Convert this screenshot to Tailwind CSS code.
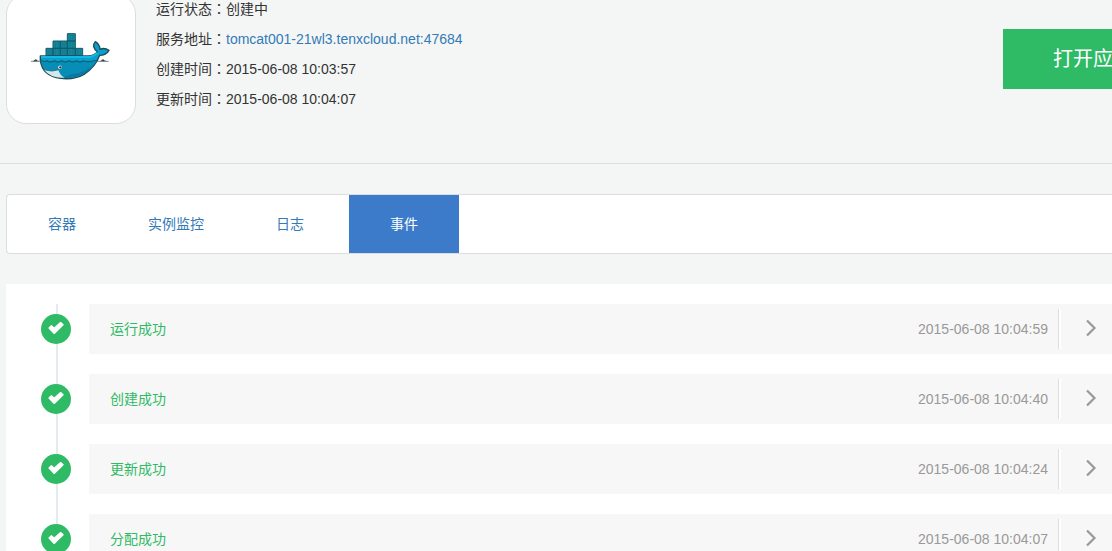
<!DOCTYPE html>
<html lang="zh-CN">
<head>
<meta charset="utf-8">
<title>tomcat001</title>
<script src="https://cdn.jsdelivr.net/npm/@tailwindcss/browser@4"></script>
</head>
<body class="h-screen overflow-hidden bg-[#f4f6f5] font-['Liberation_Sans','Noto_Sans_CJK_SC',sans-serif] text-sm text-[#333]">
<svg class="hidden" aria-hidden="true">
  <symbol id="check" viewBox="0 0 16 12"><path d="M1 6 3.400 3.700 6.200 6.300 12.600.4 15.100 2.700 6.200 11.500Z" fill="#fff" stroke="#fff" stroke-width="1.200" stroke-linejoin="round"/></symbol>
  <symbol id="chevron" viewBox="0 0 12 18"><path d="M2 1.500 9.500 9 2 16.500" fill="none" stroke="#999" stroke-width="2.200"/></symbol>
</svg>

<header class="-mt-1.5 flex items-start border-b border-[#ddd] pb-[39px] pl-1.5">
  <div class="flex size-[130px] shrink-0 items-center justify-center rounded-[20px] border border-[#ddd] bg-white">
    <svg class="h-[60px] w-[90px]" viewBox="3 12 270 180" role="img" aria-label="Docker">
      <g fill="#12889c" stroke="#17596a" stroke-width="3">
        <path d="M127 26h24v22h-24zM84 48h22v22H84zM106 48h21v22h-21zM127 48h24v22h-24zM63 70h21v22H63zM84 70h22v22H84zM106 70h21v22h-21zM127 70h24v22h-24zM151 70h22v22h-22z"/>
        <path d="M135 28v18M143 28v18M91 50v18M99 50v18M113 50v18M120 50v18M135 50v18M143 50v18M70 72v18M77 72v18M91 72v18M99 72v18M113 72v18M120 72v18M135 72v18M143 72v18M158 72v18M166 72v18" fill="none" stroke="#0c7187" stroke-width="1.500"/>
      </g>
      <path d="M46 93H190Q210 92 217 80Q198 64 211 50Q224 58 225 73Q238 67 252 76Q243 91 224 91Q211 127 177 148Q147 165 107 160Q52 153 46 106Z" fill="#079fcb" stroke="#214b59" stroke-width="4" stroke-linejoin="round"/>
      <path d="M48 108Q57 113 66 107Q77 114 88 107Q99 114 110 107Q121 114 132 107Q143 114 154 107Q165 114 176 107Q187 114 216 106Q203 132 174 147Q147 162 112 158Q60 151 48 108Z" fill="#078db6"/>
      <path d="M115 158Q139 145 163 144Q190 135 207 118Q195 137 174 147Q147 162 115 158Z" fill="#0879a0"/>
      <path d="M57 134Q80 142 100 135Q105 151 118 158Q77 160 57 134Z" fill="#d4e7e9"/>
      <path d="M57 134Q81 143 101 134" fill="none" stroke="#286577" stroke-width="2"/>
      <path d="M48 96H194Q211 92 218 83" fill="none" stroke="#12b7e4" stroke-width="6"/>
      <path d="M46 105Q57 113 66 107Q77 114 88 107Q99 114 110 107Q121 114 132 107Q143 114 154 107Q165 114 176 107Q187 114 217 105" fill="none" stroke="#145f7a" stroke-width="3.500"/>
      <path d="M18 109H46M215 109H251" stroke="#45565b" stroke-width="2"/>
      <path d="M23 109Q30 105 33 102Q35 107 43 109ZM225 109Q232 105 234 102Q237 107 247 109Z" fill="#36464b"/>
      <circle cx="105" cy="127" r="5.500" fill="#edf3f3"/><circle cx="106" cy="127" r="3.500" fill="#293e49"/>
    </svg>
  </div>
  <dl class="ml-5 leading-[30px]">
    <div class="flex"><dt>运行状态<span class="font-['Noto_Sans_CJK_TC',sans-serif] leading-none" lang="zh-TW">：</span></dt><dd>创建中</dd></div>
    <div class="flex"><dt>服务地址<span class="font-['Noto_Sans_CJK_TC',sans-serif] leading-none" lang="zh-TW">：</span></dt><dd><a href="#" class="text-[#337ab7]">tomcat001-21wl3.tenxcloud.net:47684</a></dd></div>
    <div class="flex"><dt>创建时间<span class="font-['Noto_Sans_CJK_TC',sans-serif] leading-none" lang="zh-TW">：</span></dt><dd>2015-06-08 10:03:57</dd></div>
    <div class="flex"><dt>更新时间<span class="font-['Noto_Sans_CJK_TC',sans-serif] leading-none" lang="zh-TW">：</span></dt><dd>2015-06-08 10:04:07</dd></div>
  </dl>
  <button type="button" class="mt-[35px] -mr-[71px] ml-auto h-[60px] shrink-0 bg-[#2fba66] px-[50px] text-xl whitespace-nowrap text-white">打开应用</button>
</header>

<nav class="mt-[30px] ml-1.5 flex gap-1 rounded-l border border-r-0 border-[#ddd] bg-white text-center leading-[58px] text-[#337ab7]">
  <a href="#" class="w-[110px]">容器</a>
  <a href="#" class="w-[110px]">实例监控</a>
  <a href="#" class="w-[110px]">日志</a>
  <a href="#" aria-current="page" class="w-[110px] bg-[#3b7bca] text-white">事件</a>
</nav>

<main class="mt-[30px] ml-1.5 bg-white pt-5 pl-[35px]">
  <ol>
    <li class="flex">
      <div class="relative flex w-[30px] justify-center pt-2.5 pb-[30px]">
        <span class="absolute inset-y-0 left-[15px] w-0.5 bg-[#e5eaef]"></span>
        <span class="relative flex size-[30px] items-center justify-center rounded-full bg-[#2fba66] pb-0.5"><svg class="h-3 w-4"><use href="#check"/></svg></span>
      </div>
      <div class="ml-[18px] flex h-[50px] grow items-center bg-[#f7f7f7] pl-[21px]">
        <h2 class="text-[#2fba66]">运行成功</h2>
        <time class="mr-2.5 ml-auto text-[#999]">2015-06-08 10:04:59</time>
        <button type="button" aria-label="展开" class="flex h-10 w-[54px] items-center border-l border-[#ddd] pb-0.5 pl-[26px] shadow-[inset_2px_0_0_#fff]"><svg class="h-[18px] w-3"><use href="#chevron"/></svg></button>
      </div>
    </li>
    <li class="flex">
      <div class="relative flex w-[30px] justify-center pt-2.5 pb-[30px]">
        <span class="absolute inset-y-0 left-[15px] w-0.5 bg-[#e5eaef]"></span>
        <span class="relative flex size-[30px] items-center justify-center rounded-full bg-[#2fba66] pb-0.5"><svg class="h-3 w-4"><use href="#check"/></svg></span>
      </div>
      <div class="ml-[18px] flex h-[50px] grow items-center bg-[#f7f7f7] pl-[21px]">
        <h2 class="text-[#2fba66]">创建成功</h2>
        <time class="mr-2.5 ml-auto text-[#999]">2015-06-08 10:04:40</time>
        <button type="button" aria-label="展开" class="flex h-10 w-[54px] items-center border-l border-[#ddd] pb-0.5 pl-[26px] shadow-[inset_2px_0_0_#fff]"><svg class="h-[18px] w-3"><use href="#chevron"/></svg></button>
      </div>
    </li>
    <li class="flex">
      <div class="relative flex w-[30px] justify-center pt-2.5 pb-[30px]">
        <span class="absolute inset-y-0 left-[15px] w-0.5 bg-[#e5eaef]"></span>
        <span class="relative flex size-[30px] items-center justify-center rounded-full bg-[#2fba66] pb-0.5"><svg class="h-3 w-4"><use href="#check"/></svg></span>
      </div>
      <div class="ml-[18px] flex h-[50px] grow items-center bg-[#f7f7f7] pl-[21px]">
        <h2 class="text-[#2fba66]">更新成功</h2>
        <time class="mr-2.5 ml-auto text-[#999]">2015-06-08 10:04:24</time>
        <button type="button" aria-label="展开" class="flex h-10 w-[54px] items-center border-l border-[#ddd] pb-0.5 pl-[26px] shadow-[inset_2px_0_0_#fff]"><svg class="h-[18px] w-3"><use href="#chevron"/></svg></button>
      </div>
    </li>
    <li class="flex">
      <div class="relative flex w-[30px] justify-center pt-2.5 pb-[30px]">
        <span class="absolute inset-y-0 left-[15px] w-0.5 bg-[#e5eaef]"></span>
        <span class="relative flex size-[30px] items-center justify-center rounded-full bg-[#2fba66] pb-0.5"><svg class="h-3 w-4"><use href="#check"/></svg></span>
      </div>
      <div class="ml-[18px] flex h-[50px] grow items-center bg-[#f7f7f7] pl-[21px]">
        <h2 class="text-[#2fba66]">分配成功</h2>
        <time class="mr-2.5 ml-auto text-[#999]">2015-06-08 10:04:07</time>
        <button type="button" aria-label="展开" class="flex h-10 w-[54px] items-center border-l border-[#ddd] pb-0.5 pl-[26px] shadow-[inset_2px_0_0_#fff]"><svg class="h-[18px] w-3"><use href="#chevron"/></svg></button>
      </div>
    </li>
  </ol>
</main>
</body>
</html>
